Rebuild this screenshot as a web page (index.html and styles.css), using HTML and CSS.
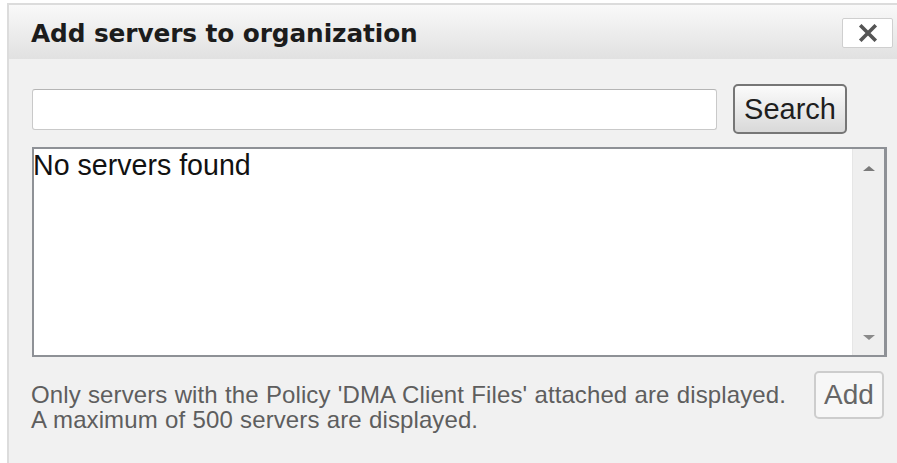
FILE: index.html
```html
<!DOCTYPE html>
<html lang="en">
<head>
<meta charset="utf-8">
<title>Add servers to organization</title>
<link rel="stylesheet" href="styles.css">
</head>
<body>
<div class="dialog">
  <div class="dialog-header">
    <h1 class="dialog-title">Add servers to organization</h1>
    <button class="close-btn" type="button" aria-label="Close">
      <svg width="20" height="18" viewBox="0 0 20 18" aria-hidden="true">
        <path d="M3.5 2.5 L16.5 15.5 M16.5 2.5 L3.5 15.5" stroke="#555555" stroke-width="3.6" stroke-linecap="square"/>
      </svg>
    </button>
  </div>
  <div class="dialog-body">
    <div class="search-row">
      <input class="search-input" type="text">
      <button class="btn btn-search" type="button">Search</button>
    </div>
    <div class="result-list">
      <div class="result-items">No servers found</div>
      <div class="scrollbar">
        <span class="arrow arrow-up"></span>
        <span class="arrow arrow-down"></span>
      </div>
    </div>
    <div class="footer-row">
      <p class="footer-note">Only servers with the Policy 'DMA Client Files' attached are displayed.<br>A maximum of 500 servers are displayed.</p>
      <button class="btn btn-add" type="button" disabled>Add</button>
    </div>
  </div>
</div>
</body>
</html>
```

FILE: styles.css
```css
html, body {
  margin: 0;
  padding: 0;
  background: #ffffff;
  overflow: hidden;
}

body {
  font-family: "Liberation Sans", Arial, sans-serif;
}

.dialog {
  margin: 3px -20px 0 7px;
  border: 2px solid #dcdcdc;
  border-bottom: none;
  background: #f1f1f1;
  min-height: 480px;
}

.dialog-header {
  height: 54px;
  display: flex;
  align-items: center;
  justify-content: space-between;
  padding: 0 22px 0 22px;
  background: linear-gradient(#f9f9f9, #e1e1e1);
}

.dialog-title {
  margin: 2px 0 0;
  font-family: "DejaVu Sans", Verdana, sans-serif;
  font-weight: bold;
  font-size: 24.8px;
  color: #1c1c1c;
  letter-spacing: -0.1px;
}

.close-btn {
  width: 51px;
  height: 30px;
  margin-top: 2px;
  padding: 0;
  display: flex;
  align-items: center;
  justify-content: center;
  background: #ffffff;
  border: 1px solid #cfcfcf;
  border-radius: 2px;
}

.dialog-body {
  padding: 25px 28px 0 23px;
}

.search-row {
  display: flex;
  align-items: center;
  gap: 16px;
}

.search-input {
  width: 685px;
  height: 41px;
  box-sizing: border-box;
  border: 1px solid #c9c9c9;
  border-top-color: #b5b5b5;
  border-radius: 3px;
  background: #ffffff;
}

.btn {
  font-family: "Liberation Sans", Arial, sans-serif;
  padding: 0;
  box-sizing: border-box;
}

.btn-search {
  width: 114px;
  height: 50px;
  border: 2px solid #767676;
  border-radius: 5px;
  background: linear-gradient(#fbfbfb, #d9d9d9);
  font-size: 29px;
  color: #1e1e1e;
}

.result-list {
  margin-top: 13px;
  height: 210px;
  box-sizing: border-box;
  border: 2px solid #8e9196;
  border-right-width: 3px;
  background: #ffffff;
  display: flex;
}

.result-items {
  flex: 1;
  font-size: 28.6px;
  line-height: 32px;
  color: #111111;
  margin-left: -1px;
}

.scrollbar {
  width: 31px;
  background: #efefef;
  border-left: 1px solid #e6e6e6;
  display: flex;
  flex-direction: column;
  justify-content: space-between;
  align-items: center;
  padding: 17px 0 15px;
}

.arrow {
  width: 0;
  height: 0;
  border-left: 6px solid transparent;
  border-right: 6px solid transparent;
}

.arrow-up {
  border-bottom: 5px solid #7a7a7a;
}

.arrow-down {
  border-top: 5px solid #8a8a8a;
}

.footer-row {
  margin-top: 14px;
  display: flex;
  justify-content: space-between;
  align-items: flex-start;
  padding-right: 3px;
}

.footer-note {
  margin: 11px 0 0 -1px;
  font-size: 24px;
  letter-spacing: 0.1px;
  word-spacing: 0.5px;
  line-height: 25px;
  color: #5e5e5e;
}

.btn-add {
  width: 70px;
  height: 48px;
  border: 2px solid #cdcdcd;
  border-radius: 5px;
  background: #f7f7f7;
  font-size: 28px;
  color: #666666;
}
```
